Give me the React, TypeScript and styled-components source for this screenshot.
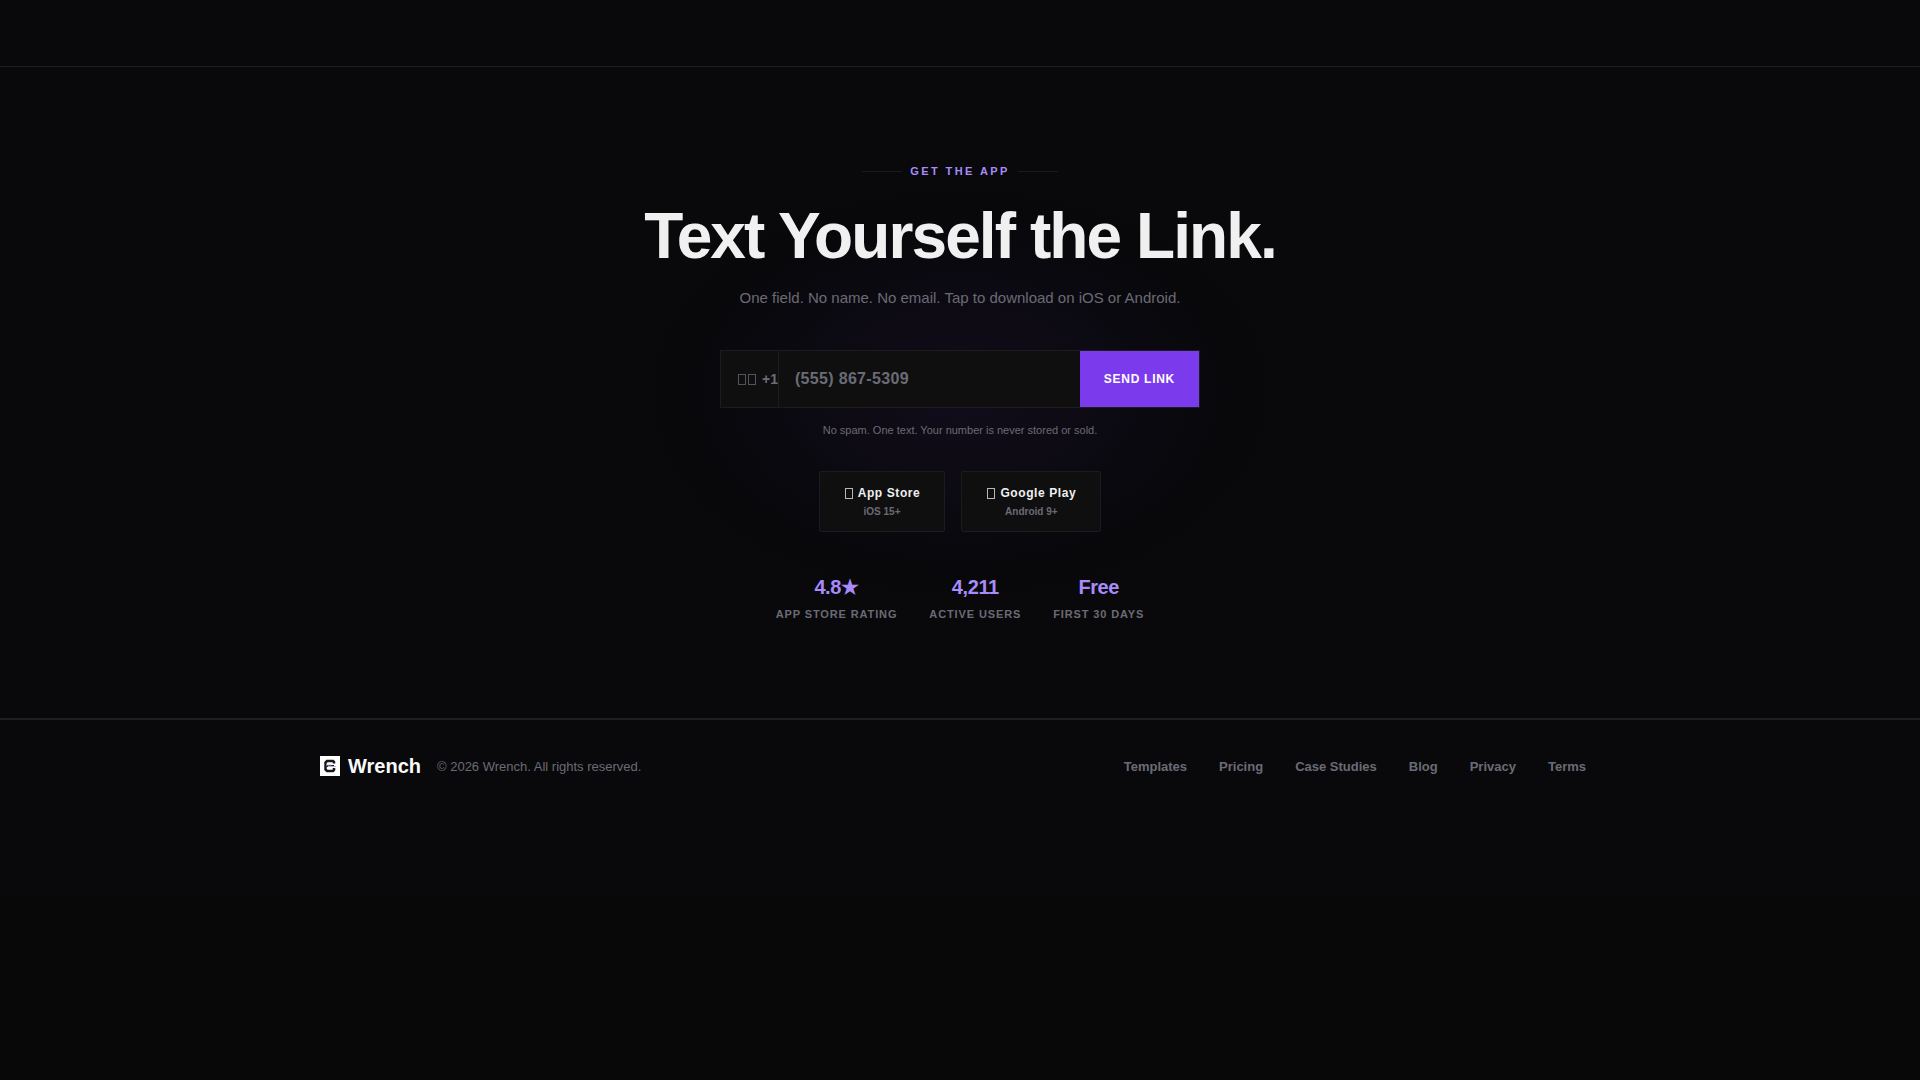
import React from "react";
import styled, { createGlobalStyle } from "styled-components";

const GlobalStyle = createGlobalStyle`
  *, *::before, *::after { box-sizing: border-box; }
  body {
    margin: 0;
    background: #080808;
    color: #f0f0f0;
    font-family: "Liberation Sans", Arial, sans-serif;
    -webkit-font-smoothing: antialiased;
  }
`;

const Page = styled.div`
  background: #09090b;
  padding-bottom: 84px;
`;

const TopBar = styled.header`
  height: 67px;
  border-bottom: 1px solid #1f1f22;
`;

const Hero = styled.main`
  position: relative;
  display: flex;
  flex-direction: column;
  align-items: center;
  padding: 96px 24px;
  border-bottom: 1px solid #1f1f22;
  text-align: center;
`;

const Glow = styled.div`
  position: absolute;
  top: 50%;
  left: 50%;
  width: 640px;
  height: 420px;
  transform: translate(-50%, -50%);
  background: radial-gradient(
    ellipse,
    rgba(124, 58, 237, 0.07) 0%,
    rgba(4, 3, 8, 0.25) 62%,
    transparent 71%
  );
  pointer-events: none;
`;

const Content = styled.div`
  position: relative;
  display: flex;
  flex-direction: column;
  align-items: center;
  width: 100%;
`;

const Eyebrow = styled.p`
  display: flex;
  align-items: center;
  gap: 8px;
  margin: 0 0 24px;
  color: #a78bfa;
  font-size: 11px;
  font-weight: 700;
  line-height: 16px;
  letter-spacing: 0.22em;

  &::before,
  &::after {
    content: "";
    width: 40px;
    height: 1px;
    background: #1a1a1d;
  }
`;

const Title = styled.h1`
  margin: 0 0 16px;
  font-size: 64px;
  font-weight: 700;
  line-height: 67px;
  letter-spacing: -0.03em;
`;

const Lead = styled.p`
  margin: 0 0 40px;
  color: #6b6b76;
  font-size: 15px;
  line-height: 24px;
`;

const PhoneForm = styled.form`
  display: flex;
  width: 100%;
  max-width: 480px;
  height: 58px;
  border: 1px solid #1c1c20;
  background: #0f0f10;
`;

const Prefix = styled.label`
  display: flex;
  align-items: center;
  gap: 2px;
  padding-left: 17px;
  border-right: 1px solid #1c1c20;
  color: #6b6b76;
  font-size: 14px;
  font-weight: 700;
  white-space: nowrap;
`;

const Box = styled.span`
  display: inline-block;
  width: 8px;
  height: 11px;
  border: 1px solid currentColor;
  opacity: 0.75;
`;

const DialCode = styled.span`
  margin-left: 4px;
`;

const PhoneInput = styled.input`
  flex: 1;
  min-width: 0;
  padding: 0 16px;
  border: 0;
  outline: 0;
  background: transparent;
  color: #f0f0f0;
  font: 700 16px "Liberation Sans", Arial, sans-serif;
  letter-spacing: 0.02em;

  &::placeholder {
    color: #6b6b76;
  }
`;

const SendButton = styled.button`
  padding: 0 24px;
  border: 0;
  background: #7c3aed;
  color: #fff;
  font: 700 12px "Liberation Sans", Arial, sans-serif;
  letter-spacing: 0.06em;
  cursor: pointer;
`;

const Note = styled.p`
  margin: 14px 0 32px;
  color: #6b6b76;
  font-size: 11px;
  line-height: 17px;
`;

const Stores = styled.div`
  display: flex;
  flex-wrap: wrap;
  justify-content: center;
  gap: 16px;
  margin-bottom: 40px;
`;

const StoreLink = styled.a`
  display: flex;
  flex-direction: column;
  align-items: center;
  gap: 5px;
  padding: 13px 24px;
  border: 1px solid #1c1c20;
  border-radius: 2px;
  background: #0f0f10;
  color: #f0f0f0;
  font-size: 12px;
  font-weight: 700;
  line-height: 16px;
  letter-spacing: 0.05em;
  text-decoration: none;
`;

const StoreName = styled.span`
  display: flex;
  align-items: center;
  gap: 5px;
  padding-left: 1px;
`;

const StoreMeta = styled.span`
  color: #6b6b76;
  font-size: 10px;
  line-height: 12px;
  letter-spacing: 0;
`;

const Stats = styled.dl`
  display: flex;
  flex-wrap: wrap;
  justify-content: center;
  gap: 32px;
  margin: 0;
`;

const Stat = styled.div`
  display: flex;
  flex-direction: column-reverse;
  gap: 4px;
`;

const StatValue = styled.dd`
  margin: 0;
  color: #a78bfa;
  font-size: 20px;
  font-weight: 700;
  line-height: 30px;
  letter-spacing: -0.02em;
`;

const StatLabel = styled.dt`
  color: #6b6b76;
  font-size: 11px;
  font-weight: 700;
  line-height: 16px;
  letter-spacing: 0.08em;
`;

const Footer = styled.footer`
  padding: 32px 24px;
  border-top: 1px solid #1f1f22;
`;

const FooterInner = styled.div`
  display: flex;
  flex-wrap: wrap;
  align-items: center;
  justify-content: space-between;
  gap: 24px;
  max-width: 1280px;
  margin: 0 auto;
  padding-right: 14px;
`;

const Brand = styled.div`
  display: flex;
  align-items: center;
  gap: 16px;
`;

const BrandLink = styled.a`
  display: flex;
  align-items: center;
  gap: 8px;
  color: #fafafa;
  font-size: 20px;
  font-weight: 700;
  line-height: 28px;
  text-decoration: none;
`;

const Copyright = styled.span`
  color: #6b6b76;
  font-size: 13px;
  line-height: 21px;
`;

const FooterNav = styled.nav`
  display: flex;
  flex-wrap: wrap;
  gap: 32px;
`;

const FooterLink = styled.a`
  color: #6b6b76;
  font-size: 13px;
  font-weight: 700;
  line-height: 21px;
  text-decoration: none;
`;

const stores = [
  { name: "App Store", meta: "iOS 15+" },
  { name: "Google Play", meta: "Android 9+" },
];

const stats = [
  { value: "4.8★", label: "APP STORE RATING" },
  { value: "4,211", label: "ACTIVE USERS" },
  { value: "Free", label: "FIRST 30 DAYS" },
];

const links = ["Templates", "Pricing", "Case Studies", "Blog", "Privacy", "Terms"];

function Logo() {
  return (
    <svg width="20" height="20" viewBox="0 0 20 20" aria-hidden="true">
      <rect width="20" height="20" fill="#fff" />
      <path d="M14 7.5V6l-1-1H7L5.500 6.500v7L7 15h6l1-1v-2" fill="none" stroke="#18181b" strokeWidth="2.500" />
      <path d="M6 10h8" stroke="#26262e" strokeWidth="2" />
      <path d="M6 9h5M8 10.500h8" stroke="#b4b4d0" strokeWidth="1" />
    </svg>
  );
}

export default function App() {
  return (
    <>
      <GlobalStyle />
      <Page>
        <TopBar />
        <Hero>
          <Glow />
          <Content>
            <Eyebrow>GET THE APP</Eyebrow>
            <Title>Text Yourself the Link.</Title>
            <Lead>One field. No name. No email. Tap to download on iOS or Android.</Lead>
            <PhoneForm onSubmit={(event) => event.preventDefault()}>
              <Prefix htmlFor="phone">
                <Box />
                <Box />
                <DialCode>+1</DialCode>
              </Prefix>
              <PhoneInput id="phone" type="tel" placeholder="(555) 867-5309" />
              <SendButton type="submit">SEND LINK</SendButton>
            </PhoneForm>
            <Note>No spam. One text. Your number is never stored or sold.</Note>
            <Stores>
              {stores.map((store) => (
                <StoreLink href="#" key={store.name}>
                  <StoreName>
                    <Box />
                    {store.name}
                  </StoreName>
                  <StoreMeta>{store.meta}</StoreMeta>
                </StoreLink>
              ))}
            </Stores>
            <Stats>
              {stats.map((stat) => (
                <Stat key={stat.label}>
                  <StatLabel>{stat.label}</StatLabel>
                  <StatValue>{stat.value}</StatValue>
                </Stat>
              ))}
            </Stats>
          </Content>
        </Hero>
        <Footer>
          <FooterInner>
            <Brand>
              <BrandLink href="#">
                <Logo />
                Wrench
              </BrandLink>
              <Copyright>© 2026 Wrench. All rights reserved.</Copyright>
            </Brand>
            <FooterNav>
              {links.map((link) => (
                <FooterLink href="#" key={link}>
                  {link}
                </FooterLink>
              ))}
            </FooterNav>
          </FooterInner>
        </Footer>
      </Page>
    </>
  );
}
